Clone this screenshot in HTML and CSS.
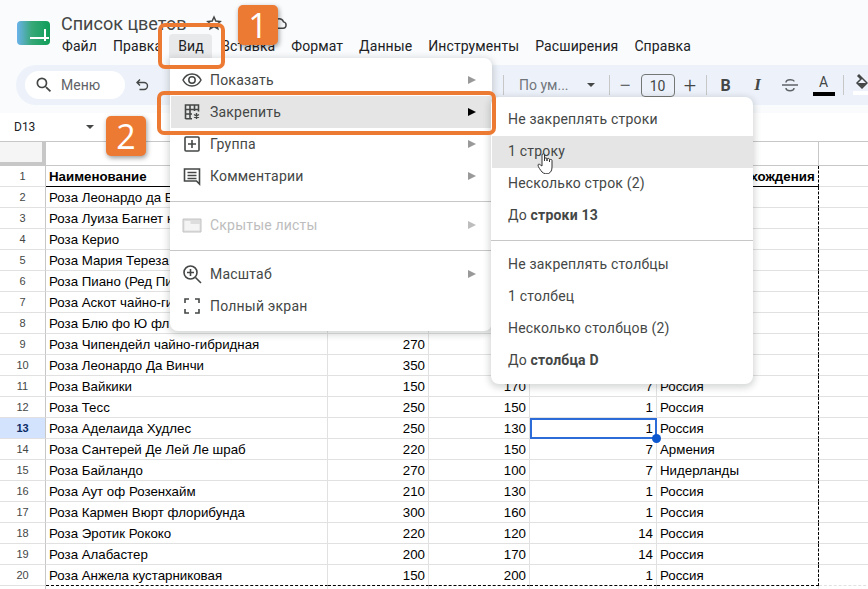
FILE: index.html
```html
<!DOCTYPE html>
<html lang="ru">
  <head>
    <title>Список цветов</title>
    <meta charset="UTF-8" />
    <meta name="viewport" content="width=device-width" />
    <link rel="stylesheet" href="styles.css">
  </head>
  <body>
    <div class="app">
      <header class="top">
        <div class="logo"><span class="logo-h"></span><span class="logo-v"></span></div>
        <div class="doc">
          <div class="doc-title">
            <span class="doc-name">Список цветов</span>
            <svg class="star" width="18" height="18" viewBox="0 0 24 24" fill="none" stroke="#444746" stroke-width="2"><path d="M12 4l2.400 5.400 5.800.6-4.400 3.900 1.300 5.700L12 16.700l-5.100 2.900 1.300-5.700L3.800 10l5.800-.6z"/></svg>
            <svg class="cloud" width="18" height="18" viewBox="0 0 24 24" fill="none" stroke="#444746" stroke-width="2"><path d="M7 19a4 4 0 0 1-.6-8A6 6 0 0 1 18 10.500a4.300 4.300 0 0 1-.5 8.500z"/></svg>
          </div>
          <nav class="menubar">
            <span>Файл</span>
            <span>Правка</span>
            <span class="open">Вид</span>
            <span>Вставка</span>
            <span>Формат</span>
            <span>Данные</span>
            <span>Инструменты</span>
            <span>Расширения</span>
            <span>Справка</span>
          </nav>
        </div>
      </header>

      <div class="toolbar">
        <div class="search">
          <svg width="20" height="20" viewBox="0 0 24 24" fill="#444746"><path d="M15.500 14h-.79l-.28-.27A6.470 6.470 0 0 0 16 9.500 6.500 6.500 0 1 0 9.500 16c1.610 0 3.090-.59 4.230-1.570l.27.28v.79l5 4.990L20.490 19l-4.990-5zm-6 0C7.010 14 5 11.990 5 9.500S7.010 5 9.500 5 14 7.010 14 9.500 11.990 14 9.500 14z"/></svg>
          <span>Меню</span>
        </div>
        <svg class="undo" width="14" height="14" viewBox="0 0 14 14" fill="none" stroke="#444746" stroke-width="1.400"><path d="M5 1.500L2 4.500l3 3M2.500 4.500H9a3 3 0 0 1 0 7H4.500"/></svg>
        <span class="hidden-tools"></span>
        <span class="sep"></span>
        <span class="font-select">По ум...</span>
        <span class="caret"></span>
        <span class="sep sep-b"></span>
        <span class="step">−</span>
        <span class="size">10</span>
        <span class="step">+</span>
        <span class="sep"></span>
        <span class="tool bold">B</span>
        <span class="tool italic">I</span>
        <svg class="tool strike" width="22" height="18" viewBox="0 0 22 18" fill="none" stroke="#5f6368" stroke-width="1.500"><path d="M3 9h16M7 6.500C7 3 15 3 15 5.500M7 12c0 3.500 8 3.500 8 0"/></svg>
        <span class="tool color-a">A</span>
        <span class="sep"></span>
        <svg class="paint" width="18" height="24" viewBox="0 0 18 24"><path d="M6 2l3 3 5 5-5 5-5-5 4-4-3-3z" fill="none" stroke="#444746" stroke-width="1.500"/><path d="M4.500 10h9l-4.500 4.500z" fill="#444746"/><rect x="0" y="18" width="18" height="4" fill="#fff"/></svg>
      </div>

      <div class="namebox">
        <span>D13</span>
        <span class="caret"></span>
      </div>

      <table class="sheet">
        <colgroup>
          <col class="c-head"><col class="c-a"><col class="c-b"><col class="c-b"><col class="c-d"><col class="c-e"><col class="c-f">
        </colgroup>
        <tr class="letters"><th class="corner"></th><th></th><th></th><th></th><th></th><th></th><th>F</th></tr>
        <tr class="titles"><th>1</th><td>Наименование</td><td></td><td></td><td></td><td class="edge">Страна происхождения</td><td></td></tr>
        <tr><th>2</th><td>Роза Леонардо да В</td><td></td><td></td><td></td><td class="edge"></td><td></td></tr>
        <tr><th>3</th><td>Роза Луиза Багнет к</td><td></td><td></td><td></td><td class="edge"></td><td></td></tr>
        <tr><th>4</th><td>Роза Керио</td><td></td><td></td><td></td><td class="edge"></td><td></td></tr>
        <tr><th>5</th><td>Роза Мария Тереза</td><td></td><td></td><td></td><td class="edge"></td><td></td></tr>
        <tr><th>6</th><td>Роза Пиано (Ред Пи</td><td></td><td></td><td></td><td class="edge"></td><td></td></tr>
        <tr><th>7</th><td>Роза Аскот чайно-ги</td><td></td><td></td><td></td><td class="edge"></td><td></td></tr>
        <tr><th>8</th><td>Роза Блю фо Ю фл</td><td></td><td></td><td></td><td class="edge"></td><td></td></tr>
        <tr><th>9</th><td>Роза Чипендейл чайно-гибридная</td><td class="n">270</td><td></td><td></td><td class="edge"></td><td></td></tr>
        <tr><th>10</th><td>Роза Леонардо Да Винчи</td><td class="n">350</td><td></td><td></td><td class="edge"></td><td></td></tr>
        <tr><th>11</th><td>Роза Вайкики</td><td class="n">150</td><td class="n">170</td><td class="n">7</td><td class="edge">Россия</td><td></td></tr>
        <tr><th>12</th><td>Роза Тесс</td><td class="n">250</td><td class="n">150</td><td class="n">1</td><td class="edge">Россия</td><td></td></tr>
        <tr><th class="current">13</th><td>Роза Аделаида Худлес</td><td class="n">250</td><td class="n">130</td><td class="n active">1<span class="handle"></span></td><td class="edge">Россия</td><td></td></tr>
        <tr><th>14</th><td>Роза Сантерей Де Лей Ле шраб</td><td class="n">220</td><td class="n">150</td><td class="n">7</td><td class="edge">Армения</td><td></td></tr>
        <tr><th>15</th><td>Роза Байландо</td><td class="n">270</td><td class="n">100</td><td class="n">7</td><td class="edge">Нидерланды</td><td></td></tr>
        <tr><th>16</th><td>Роза Аут оф Розенхайм</td><td class="n">210</td><td class="n">130</td><td class="n">1</td><td class="edge">Россия</td><td></td></tr>
        <tr><th>17</th><td>Роза Кармен Вюрт флорибунда</td><td class="n">300</td><td class="n">160</td><td class="n">1</td><td class="edge">Россия</td><td></td></tr>
        <tr><th>18</th><td>Роза Эротик Рококо</td><td class="n">220</td><td class="n">120</td><td class="n">14</td><td class="edge">Россия</td><td></td></tr>
        <tr><th>19</th><td>Роза Алабастер</td><td class="n">200</td><td class="n">170</td><td class="n">14</td><td class="edge">Россия</td><td></td></tr>
        <tr class="last"><th>20</th><td>Роза Анжела кустарниковая</td><td class="n">150</td><td class="n">200</td><td class="n">1</td><td class="edge">Россия</td><td></td></tr>
        <tr><th></th><td></td><td></td><td></td><td></td><td></td><td></td></tr>
      </table>
    </div>

    <!-- View menu -->
    <div class="menu view-menu">
      <div class="item">
        <svg class="icon" viewBox="0 0 20 20" fill="none" stroke="#444746" stroke-width="1.500"><path d="M1 10c2-4 5.500-6 9-6s7 2 9 6c-2 4-5.500 6-9 6s-7-2-9-6z"/><circle cx="10" cy="10" r="3.200"/></svg>
        <span class="label">Показать</span><span class="arrow"></span>
      </div>
      <div class="item hover">
        <svg class="icon" viewBox="0 0 20 20" fill="none" stroke="#444746" stroke-width="1.600"><path d="M3.500 17V3h13v6.500M3.500 7.500h13M3.500 12H10M3.500 16.700H10M8 3v14M12.500 3v6"/><path d="M14.500 11v6M12 12.500l5 3M17 12.500l-5 3" stroke-width="1.400"/></svg>
        <span class="label">Закрепить</span><span class="arrow dark"></span>
      </div>
      <div class="item">
        <svg class="icon" viewBox="0 0 20 20" fill="none" stroke="#444746" stroke-width="1.600"><rect x="3" y="3" width="14" height="14" rx="1"/><path d="M10 6v8M6 10h8"/></svg>
        <span class="label">Группа</span><span class="arrow"></span>
      </div>
      <div class="item">
        <svg class="icon" viewBox="0 0 20 20" fill="none" stroke="#444746" stroke-width="1.600"><path d="M2.500 3h15v15l-3-3h-12z"/><path d="M5.500 6.500h9M5.500 9.500h9M5.500 12.500h9"/></svg>
        <span class="label">Комментарии</span><span class="arrow"></span>
      </div>
      <div class="line"></div>
      <div class="item off">
        <svg class="icon" viewBox="0 0 20 20" fill="none"><path d="M1 4h18v13H1z" fill="#ddd" stroke="#c4c4c4"/><path d="M2.500 9h15v6.500h-15z" fill="#f4f4f4"/><path d="M2.500 6h6v3h-6z" fill="#f4f4f4"/></svg>
        <span class="label">Скрытые листы</span><span class="arrow"></span>
      </div>
      <div class="line"></div>
      <div class="item">
        <svg class="icon" viewBox="0 0 20 20" fill="none" stroke="#444746" stroke-width="1.600"><circle cx="8.500" cy="8.500" r="6.500"/><path d="M13.500 13.500l5.500 5.500M8.500 5v7M5 8.500h7"/></svg>
        <span class="label">Масштаб</span><span class="arrow"></span>
      </div>
      <div class="item">
        <svg class="icon" viewBox="0 0 20 20" fill="none" stroke="#444746" stroke-width="1.600"><path d="M3 7V3h4M13 3h4v4M17 13v4h-4M7 17H3v-4"/></svg>
        <span class="label">Полный экран</span>
      </div>
    </div>

    <!-- Freeze submenu -->
    <div class="menu sub-menu">
      <div class="item upper">Не закреплять строки</div>
      <div class="item upper hover">1 строку</div>
      <div class="item upper">Несколько строк (2)</div>
      <div class="item upper">До&nbsp;<b>строки 13</b></div>
      <div class="line"></div>
      <div class="item">Не закреплять столбцы</div>
      <div class="item">1 столбец</div>
      <div class="item">Несколько столбцов (2)</div>
      <div class="item">До&nbsp;<b>столбца D</b></div>
    </div>

    <!-- Callouts drawn over the screenshot -->
    <div class="frame frame-one"></div>
    <div class="frame frame-two"></div>
    <div class="badge badge-one">1</div>
    <div class="badge badge-two">2</div>

    <svg class="pointer" width="20" height="22" viewBox="0 0 20 22">
      <path d="M5 20c-1.500-2-4-5-4-7 0-1 1.500-1.200 2.500 0L5 14V3c0-1.700 2.500-1.700 2.500 0v6-2c0-1.500 2.500-1.500 2.500 0v2-1.500c0-1.500 2.500-1.500 2.500 0V10 8.500c0-1.500 2.500-1.500 2.500 0V15c0 3-1 5.500-3.500 6.500C10 22 7 22 5 20z" fill="#fff" stroke="#333" stroke-width="1"/>
    </svg>
  </body>
</html>
```

FILE: styles.css
```css
/* Reset */
* {
  margin: 0;
  padding: 0;
  box-sizing: border-box;
}

body {
  background-color: #f9fbfd;
  font-family: Roboto, sans-serif;
  color: #202124;
  overflow: hidden;
}

.app {
  height: 589px;
  overflow: hidden;
}

/* Title and menu bar */
.top {
  display: flex;
  height: 65px;
  padding: 12px 0 0 17px;
}

.logo {
  position: relative;
  width: 33px;
  height: 24px;
  margin: 9px 11px 0 0;
  border-radius: 4px;
  background: linear-gradient(90deg, #6bb2ea, #37a878 45%, #0f9d58);
}

.logo-h,
.logo-v {
  position: absolute;
  background: #fff;
}

.logo-h {
  left: 13px;
  top: 16px;
  width: 19px;
  height: 2px;
}

.logo-v {
  left: 27px;
  top: 8px;
  width: 2px;
  height: 12px;
}

.doc-title {
  display: flex;
  align-items: center;
  height: 22px;
}

.doc-name {
  font-size: 18px;
  color: #444746;
}

.star {
  margin-left: 18px;
}

.cloud {
  margin-left: 47px;
}

.menubar {
  display: flex;
  margin: 0 0 0 -7px;
  font-size: 14px;
  letter-spacing: 0.09px;
}

.menubar span {
  height: 24px;
  padding: 4px 8px 0;
  color: #202124;
}

.menubar .open {
  width: 43px;
  margin: 0 1px 0 -1px;
  padding-left: 9px;
  background: #e8e9eb;
  border-radius: 4px 4px 0 0;
}

/* Toolbar */
.toolbar {
  display: flex;
  align-items: center;
  width: 900px;
  height: 40px;
  margin-left: 16px;
  padding-left: 9px;
  background: #edf2fa;
  border-radius: 20px;
  color: #444746;
}

.search {
  display: flex;
  align-items: center;
  gap: 7px;
  width: 100px;
  height: 28px;
  padding-left: 9px;
  background: #fff;
  border-radius: 14px;
  font-size: 14px;
  color: #5f6368;
}

.undo {
  margin-left: 10px;
}

.hidden-tools {
  width: 354px;
}

.sep {
  width: 1px;
  height: 20px;
  background: #c7c7c7;
}

.font-select {
  margin-left: 15px;
  font-size: 14px;
  color: #70757a;
}

.caret {
  width: 0;
  height: 0;
  border-left: 4px solid transparent;
  border-right: 4px solid transparent;
  border-top: 4px solid #444746;
}

.toolbar .caret {
  margin-left: 18px;
}

.sep-b {
  margin-left: 14px;
}

.step {
  width: 31px;
  text-align: center;
  font-size: 22px;
  font-weight: 300;
  color: #444746;
}

.size {
  width: 34px;
  height: 23px;
  border: 1px solid #747775;
  border-radius: 4px;
  text-align: center;
  font-size: 14px;
  line-height: 22px;
}

.tool {
  margin-left: 10px;
  width: 22px;
  text-align: center;
  font-size: 16px;
}

.sep + .tool {
  margin-left: 8px;
}

.bold {
  font-weight: 700;
}

.italic {
  font-family: "Liberation Serif", serif;
  font-style: italic;
  font-weight: 700;
  font-size: 17px;
}

.color-a {
  margin-left: 12px;
  margin-right: 8px;
  height: 22px;
  border-bottom: 4px solid #000;
  font-size: 14px;
  line-height: 16px;
}

.paint {
  margin-left: 9px;
}

/* Name box */
.namebox {
  display: flex;
  align-items: center;
  height: 28px;
  margin-top: 8px;
  padding-left: 14px;
  background: #fff;
  font-size: 12px;
  color: #202124;
}

.namebox .caret {
  margin-left: 51px;
}

/* Spreadsheet */
.sheet {
  width: 924px;
  table-layout: fixed;
  border-collapse: separate;
  border-spacing: 0;
  background: #fff;
  font-family: "Liberation Sans", Arial, sans-serif;
  font-size: 13.3px;
  color: #000;
}

.c-head { width: 46px; }
.c-a { width: 282px; }
.c-b { width: 101px; }
.c-d { width: 127px; }
.c-e { width: 162px; }
.c-f { width: 106px; }

.sheet tr {
  height: 21px;
}

.sheet td {
  padding: 0 3px;
  border-right: 1px solid #e1e1e1;
  border-bottom: 1px solid #e1e1e1;
  white-space: nowrap;
  overflow: hidden;
}

.sheet th {
  border-right: 1px solid #c7c7c7;
  border-bottom: 1px solid #e1e1e1;
  font-size: 11px;
  font-weight: 400;
  color: #444746;
}

.sheet .letters {
  height: 25px;
}

.letters th {
  border-top: 1px solid #c7c7c7;
  border-bottom: 1px solid #c7c7c7;
  border-right: 1px solid #c7c7c7;
  font-size: 12px;
}

.letters .corner {
  background: #f5f5f5;
  border-right: 4px solid #c7c7c7;
  border-bottom: 4px solid #c7c7c7;
}

.titles td {
  font-weight: 700;
  border-bottom-color: #000;
}

.titles td:last-child {
  border-bottom-color: #e1e1e1;
}

.n {
  text-align: right;
}

.sheet .edge {
  border-right: 1px dashed #000;
}

.last td {
  border-bottom: 1px dashed #000;
}

.last td:last-child {
  border-bottom-color: #e1e1e1;
}

.sheet .current {
  background: #d3e3fd;
  font-weight: 700;
  color: #0b2c66;
}

.sheet .active {
  position: relative;
  overflow: visible;
  outline: 2px solid #2b6cd8;
  outline-offset: -2px;
}

.handle {
  position: absolute;
  right: -5px;
  bottom: -5px;
  width: 9px;
  height: 9px;
  border-radius: 50%;
  background: #0b57d0;
  z-index: 1;
}

/* Menus */
.menu {
  position: absolute;
  background: #fff;
  border-radius: 8px;
  box-shadow: 0 2px 6px 2px rgba(60, 64, 67, 0.2);
  font-size: 14px;
  letter-spacing: 0.2px;
  color: #444746;
}

.view-menu {
  left: 170px;
  top: 58px;
  width: 322px;
  height: 273px;
  padding-top: 6px;
  border-radius: 0 8px 8px 8px;
}

.sub-menu {
  left: 491px;
  top: 97px;
  width: 262px;
  height: 287px;
  padding-top: 7px;
}

.item {
  display: flex;
  align-items: center;
  height: 32px;
  padding-left: 12px;
}

.sub-menu .item {
  padding-left: 17px;
}

.sub-menu .upper {
  padding-bottom: 2px;
}

.item b {
  font-weight: 700;
}

.hover {
  background: #e5e5e5;
  margin-left: 1px;
}

.view-menu .hover {
  padding-left: 11px;
}

.sub-menu .hover {
  padding-left: 16px;
}

.icon {
  width: 20px;
  height: 20px;
  margin-right: 8px;
  flex: none;
}

.label {
  flex: 1;
}

.arrow {
  width: 0;
  height: 0;
  margin-right: 16px;
  border-top: 4px solid transparent;
  border-bottom: 4px solid transparent;
  border-left: 8px solid #999;
}

.arrow.dark {
  border-left-color: #000;
}

.off {
  color: #bdbdbd;
}

.off .arrow {
  border-left-color: #bdbdbd;
}

.line {
  height: 1px;
  margin: 9px 0 7px;
  background: #c7c7c7;
}

.sub-menu .line {
  margin: 8px 0 7px;
}

/* Orange callouts */
.frame {
  position: absolute;
  border: 4px solid #ed7a33;
  border-radius: 7px;
}

.frame-one {
  left: 158px;
  top: 23px;
  width: 67px;
  height: 46px;
}

.frame-two {
  left: 157px;
  top: 91px;
  width: 339px;
  height: 44px;
}

.badge {
  position: absolute;
  width: 40px;
  height: 40px;
  background: #ed7a33;
  border-radius: 5px;
  box-shadow: 1px 2px 5px rgba(0, 0, 0, 0.4);
  color: #fff;
  font-family: "Open Sans", sans-serif;
  font-size: 34px;
  line-height: 40px;
  text-align: center;
}

.badge-one {
  left: 238px;
  top: 5px;
}

.badge-two {
  left: 106px;
  top: 116px;
}

.pointer {
  position: absolute;
  left: 537px;
  top: 152px;
}
```
